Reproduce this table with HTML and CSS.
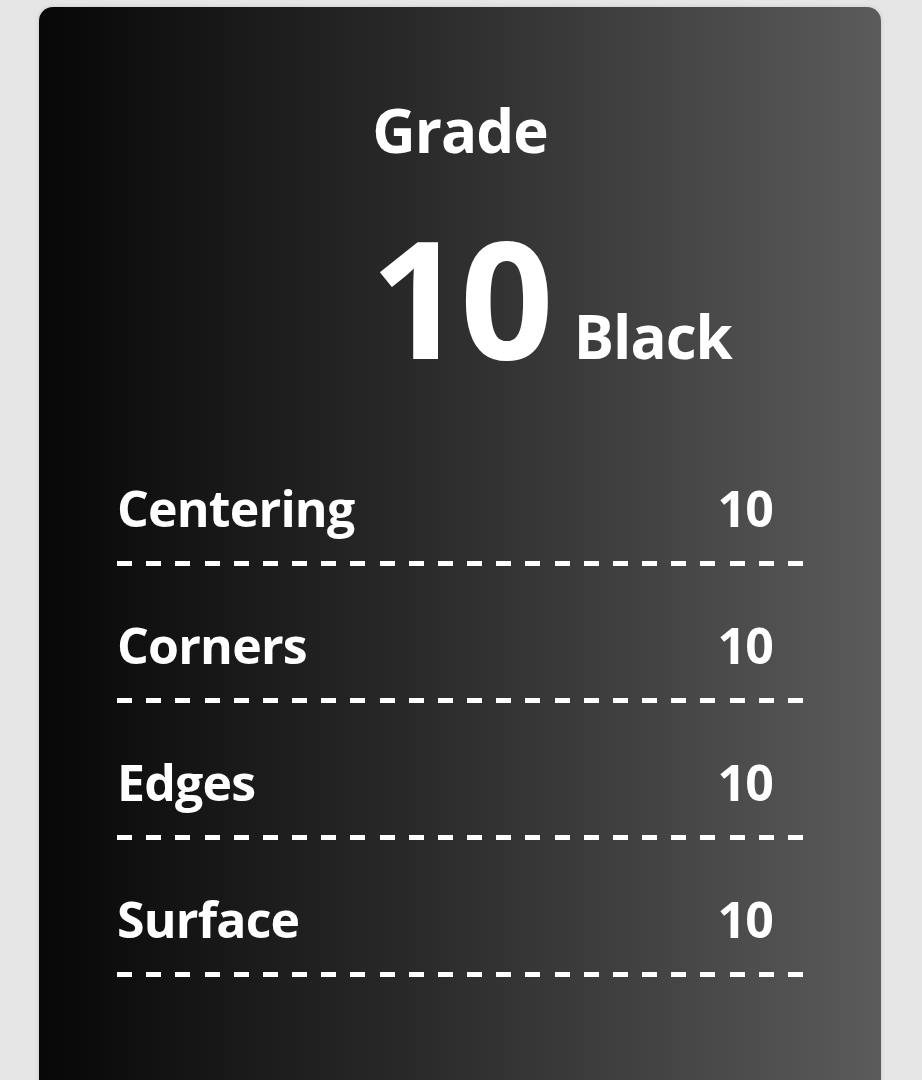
FILE: index.html
```html
<!DOCTYPE html>
<html lang="en">
<head>
<meta charset="utf-8">
<title>Grade</title>
<link rel="stylesheet" href="styles.css">
</head>
<body>
<main class="card">
  <h1 class="title">Grade</h1>
  <div class="grade">
    <span class="grade-spacer"></span>
    <span class="grade-value">10</span>
    <span class="grade-label">Black</span>
  </div>
  <ul class="subgrades">
    <li class="row"><span class="row-name">Centering</span><span class="row-value">10</span></li>
    <li class="row"><span class="row-name">Corners</span><span class="row-value">10</span></li>
    <li class="row"><span class="row-name">Edges</span><span class="row-value">10</span></li>
    <li class="row"><span class="row-name">Surface</span><span class="row-value">10</span></li>
  </ul>
</main>
</body>
</html>
```
FILE: styles.css
```css
html, body {
  margin: 0;
  padding: 0;
  overflow: hidden;
}
body {
  background: #e6e6e6;
  font-family: "Open Sans", "Noto Sans", sans-serif;
  color: #fff;
}
.card {
  box-sizing: border-box;
  width: 842px;
  min-height: 1120px;
  margin: 7px 0 0 39px;
  padding-top: 93px;
  border-radius: 14px;
  background: linear-gradient(to right, #070707 0%, #2a2a2a 45%, #5b5b5b 100%);
  box-shadow: 0 0 5px rgba(0, 0, 0, 0.12);
}
.title {
  margin: 0;
  text-align: center;
  font-size: 60px;
  font-weight: 700;
  line-height: 1;
  letter-spacing: -1px;
}
.grade {
  display: grid;
  grid-template-columns: 1fr auto 1fr;
  align-items: baseline;
  margin-top: 54px;
}
.grade-value {
  font-size: 164px;
  font-weight: 700;
  line-height: 1;
  letter-spacing: -4px;
}
.grade-label {
  padding-left: 24px;
  font-size: 60px;
  font-weight: 700;
  line-height: 1;
  letter-spacing: -1px;
}
.subgrades {
  list-style: none;
  margin: 105px 78px 0;
  padding: 0;
}
.row {
  display: flex;
  justify-content: space-between;
  align-items: baseline;
  padding: 0 30px 33px 0;
  background-image: repeating-linear-gradient(to right, #fff 0, #fff 15px, transparent 15px, transparent 29.17px);
  background-size: 100% 5px;
  background-position: left bottom;
  background-repeat: no-repeat;
  font-size: 50px;
  font-weight: 700;
  line-height: 1;
  letter-spacing: -0.8px;
}
.row + .row {
  margin-top: 54px;
}
```
